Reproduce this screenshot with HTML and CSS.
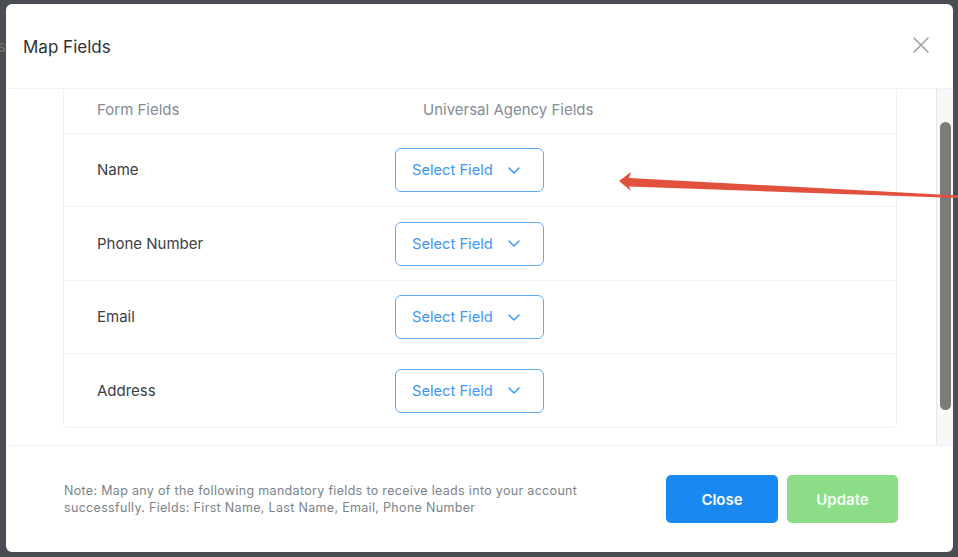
FILE: index.html
```html
<!DOCTYPE html>
<html>
<head>
<meta charset="utf-8">
<link rel="stylesheet" href="styles.css">
</head>
<body>
<div class="backdrop-text">s</div>
<div class="modal">
  <div class="modal-header">
    <h2 class="modal-title">Map Fields</h2>
    <button class="close-x" aria-label="Close">
      <svg width="16" height="16" viewBox="0 0 16 16"><path d="M1 1 L15 15 M15 1 L1 15" stroke="#9ba1a7" stroke-width="1.6" fill="none" stroke-linecap="round"/></svg>
    </button>
  </div>
  <div class="modal-body">
    <div class="scroll-content">
      <div class="card">
        <div class="row head-row">
          <div class="col-label">Form Fields</div>
          <div class="col-field head-field">Universal Agency Fields</div>
        </div>
        <div class="row">
          <div class="col-label">Name</div>
          <div class="col-field"><button class="select">Select Field<svg class="chev" width="12" height="7" viewBox="0 0 12 7"><path d="M1 1 L6 6 L11 1" stroke="#3d98f3" stroke-width="1.5" fill="none" stroke-linecap="round" stroke-linejoin="round"/></svg></button></div>
        </div>
        <div class="row">
          <div class="col-label">Phone Number</div>
          <div class="col-field"><button class="select">Select Field<svg class="chev" width="12" height="7" viewBox="0 0 12 7"><path d="M1 1 L6 6 L11 1" stroke="#3d98f3" stroke-width="1.5" fill="none" stroke-linecap="round" stroke-linejoin="round"/></svg></button></div>
        </div>
        <div class="row">
          <div class="col-label">Email</div>
          <div class="col-field"><button class="select">Select Field<svg class="chev" width="12" height="7" viewBox="0 0 12 7"><path d="M1 1 L6 6 L11 1" stroke="#3d98f3" stroke-width="1.5" fill="none" stroke-linecap="round" stroke-linejoin="round"/></svg></button></div>
        </div>
        <div class="row last">
          <div class="col-label">Address</div>
          <div class="col-field"><button class="select">Select Field<svg class="chev" width="12" height="7" viewBox="0 0 12 7"><path d="M1 1 L6 6 L11 1" stroke="#3d98f3" stroke-width="1.5" fill="none" stroke-linecap="round" stroke-linejoin="round"/></svg></button></div>
        </div>
      </div>
    </div>
    <div class="scrollbar"><div class="thumb"></div></div>
  </div>
  <div class="modal-footer">
    <p class="note">Note: Map any of the following mandatory fields to receive leads into your account successfully. Fields: First Name, Last Name, Email, Phone Number</p>
    <div class="actions">
      <button class="btn btn-close">Close</button>
      <button class="btn btn-update">Update</button>
    </div>
  </div>
</div>
<svg class="arrow" width="958" height="557" viewBox="0 0 958 557">
  <polygon points="619,181 631,172 629,178 958,195.5 958,198 629,186.5 631,191" fill="#e2503e"/>
</svg>
</body>
</html>
```

FILE: styles.css
```css
* { box-sizing: border-box; }
html, body {
  margin: 0;
  padding: 0;
  width: 958px;
  height: 557px;
  overflow: hidden;
}
body {
  background: #4a4d51;
  font-family: Inter, "Noto Sans", "Liberation Sans", sans-serif;
  position: relative;
  padding: 4px 5px 5px 6px;
}
.backdrop-text {
  position: absolute;
  left: -2px;
  top: 37px;
  font-size: 15px;
  color: #6e7276;
}
.modal {
  position: relative;
  width: 947px;
  height: 548px;
  background: #ffffff;
  border-radius: 6px;
  display: flex;
  flex-direction: column;
  overflow: hidden;
}
.modal-header {
  height: 85px;
  flex: none;
  display: flex;
  align-items: center;
  justify-content: space-between;
  padding: 0 24px 0 17px;
  border-bottom: 1px solid #edf1f6;
}
.modal-title {
  margin: 2px 0 0 0;
  font-size: 17px;
  font-weight: 400;
  color: #2e3236;
}
.close-x {
  border: 0;
  background: none;
  padding: 0;
  width: 16px;
  height: 16px;
  margin-bottom: 2px;
  display: flex;
}
.modal-body {
  height: 357px;
  flex: none;
  display: flex;
  border-bottom: 1px solid #edf1f6;
}
.scroll-content {
  flex: 1;
  padding-left: 57px;
  padding-right: 39px;
  overflow: hidden;
}
.card {
  border: 1px solid #edf2f7;
  border-top: 0;
  border-radius: 0 0 4px 4px;
}
.row {
  display: flex;
  align-items: center;
  height: 73.5px;
  border-bottom: 1px solid #edf2f7;
}
.row.last { border-bottom: 0; height: 72.5px; }
.head-row {
  height: 44.5px;
  padding-bottom: 2px;
}
.col-label {
  width: 331px;
  padding-left: 33px;
  font-size: 15px;
  color: #3b4046;
  flex: none;
}
.head-row .col-label, .head-field {
  color: #858c94;
  font-size: 15px;
}
.head-field { padding-left: 28px; }
.select {
  width: 149px;
  height: 44px;
  border: 1px solid #5eabf8;
  border-radius: 6px;
  background: #fff;
  color: #3d98f3;
  font-family: inherit;
  font-size: 14.7px;
  display: flex;
  align-items: center;
  padding: 0 0 0 16px;
  margin-top: 1px;
}
.chev { margin-left: 15px; }
.scrollbar {
  width: 17px;
  flex: none;
  background: #f8f8f8;
  border-left: 1px solid #e6e6e6;
  padding: 33px 2px 0 3px;
}
.thumb {
  width: 11px;
  height: 288px;
  background: #7b7b7b;
  border-radius: 6px;
}
.modal-footer {
  flex: 1;
  display: flex;
  align-items: center;
  justify-content: space-between;
  padding: 0 55px 0 58px;
}
.note {
  margin: 0;
  width: 545px;
  font-size: 12.5px;
  line-height: 17.5px;
  color: #7b838b;
  letter-spacing: 0.32px;
}
.actions {
  display: flex;
  gap: 9px;
}
.btn {
  height: 48px;
  border: 0;
  border-radius: 5px;
  color: #fff;
  font-family: inherit;
  font-size: 15px;
  font-weight: 600;
}
.btn-close { width: 112px; background: #1a88f1; }
.btn-update { width: 111px; background: #8ddd88; color: #f4fff3; }
.arrow {
  position: absolute;
  left: 0;
  top: 0;
  pointer-events: none;
}
```
